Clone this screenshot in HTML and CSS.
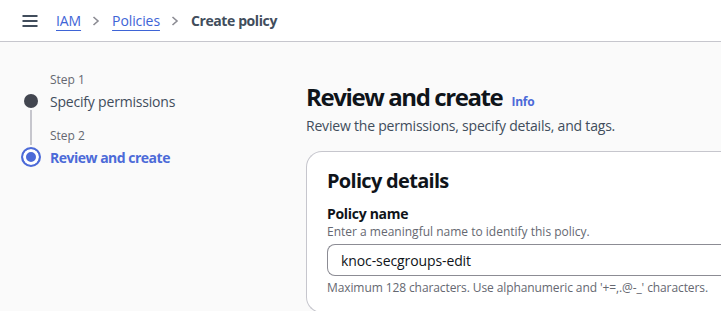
FILE: index.html
```html
<!DOCTYPE html>
<html>
<head>
<meta charset="utf-8">
<link rel="stylesheet" href="styles.css">
</head>
<body>
<header class="topbar">
  <svg class="menu" width="16" height="12" viewBox="0 0 16 12"><path d="M0.5 1h15M0.5 6h15M0.5 11h15" stroke="#414d5c" stroke-width="2" fill="none"/></svg>
  <nav class="crumbs">
    <a class="crumb-link">IAM</a>
    <svg class="chev" width="8" height="14" viewBox="0 0 8 14"><path d="M1.5 3l4.5 4-4.5 4" stroke="#8c8c94" stroke-width="1.6" fill="none"/></svg>
    <a class="crumb-link">Policies</a>
    <svg class="chev" width="8" height="14" viewBox="0 0 8 14"><path d="M1.5 3l4.5 4-4.5 4" stroke="#8c8c94" stroke-width="1.6" fill="none"/></svg>
    <span class="crumb-current">Create policy</span>
  </nav>
</header>
<div class="layout">
  <aside class="steps">
    <div class="step">
      <div class="step-label">Step 1</div>
      <div class="step-row">
        <span class="dot done"></span>
        <span class="step-title">Specify permissions</span>
      </div>
    </div>
    <div class="connector"></div>
    <div class="step">
      <div class="step-label">Step 2</div>
      <div class="step-row">
        <span class="dot active"></span>
        <span class="step-title active-title">Review and create</span>
      </div>
    </div>
  </aside>
  <main class="content">
    <div class="page-head">
      <h1>Review and create</h1>
      <a class="info">Info</a>
    </div>
    <p class="subtitle">Review the permissions, specify details, and tags.</p>
    <section class="card">
      <h2>Policy details</h2>
      <div class="field">
        <div class="field-label">Policy name</div>
        <div class="field-desc">Enter a meaningful name to identify this policy.</div>
        <div class="input">knoc-secgroups-edit</div>
        <div class="field-hint">Maximum 128 characters. Use alphanumeric and '+=,.@-_' characters.</div>
      </div>
    </section>
  </main>
</div>
</body>
</html>
```
FILE: styles.css
```css
* { box-sizing: border-box; }
html, body { margin: 0; padding: 0; }
body {
  width: 721px;
  height: 311px;
  overflow: hidden;
  background: #fafafa;
  font-family: "Open Sans", "Noto Sans", sans-serif;
  color: #0f141a;
}
.topbar {
  height: 42px;
  background: #ffffff;
  border-bottom: 1px solid #c6c6cd;
  display: flex;
  align-items: center;
  padding-left: 22px;
}
.menu { margin-right: 18px; }
.crumbs {
  display: flex;
  align-items: center;
  font-size: 14px;
  letter-spacing: -0.1px;
}
.crumb-link {
  color: #3e64d6;
  text-decoration: underline;
  text-underline-offset: 4px;
  text-decoration-thickness: 1px;
}
.chev { margin: 0 12px 0 11px; }
.crumb-current { color: #414d5c; font-weight: 700; letter-spacing: -0.4px; }

.layout {
  display: flex;
  padding-top: 30px;
}
.steps {
  width: 306px;
  padding-left: 24px;
  flex-shrink: 0;
}
.step-label {
  font-size: 12px;
  color: #656871;
  padding-left: 26px;
  line-height: 16px;
}
.step-row {
  display: flex;
  align-items: center;
  gap: 12px;
  height: 22px;
  margin-top: 2px;
}
.dot {
  width: 14px;
  height: 14px;
  border-radius: 50%;
  flex-shrink: 0;
}
.dot.done { background: #424650; }
.dot.active {
  width: 20px;
  height: 20px;
  margin-left: -3px;
  margin-right: -3px;
  border: 2px solid #4c6ad8;
  background: #4c6ad8;
  box-shadow: inset 0 0 0 3px #ffffff;
}
.step-title { font-size: 14px; color: #414d5c; letter-spacing: -0.2px; }
.active-title { color: #4c6ad8; font-weight: 700; letter-spacing: -0.5px; }
.connector {
  width: 2px;
  height: 35px;
  margin: -2px 0 -17px 6px;
  background: #c6c6cd;
}

.content { flex: 1; min-width: 0; }
.page-head { display: flex; align-items: baseline; gap: 9px; margin-top: 10px; }
h1 {
  margin: 0;
  font-size: 24px;
  font-weight: 700;
  line-height: 30px;
  letter-spacing: -1.4px;
}
.info { color: #4c6ad8; font-size: 12px; font-weight: 700; letter-spacing: -0.2px; }
.subtitle {
  margin: 4px 0 0;
  font-size: 14px;
  color: #414d5c;
  line-height: 20px;
  letter-spacing: -0.2px;
}
.card {
  margin-top: 15px;
  background: #ffffff;
  border: 1px solid #c6c6cd;
  border-right: none;
  border-radius: 16px 0 0 16px;
  padding: 16px 0 16px 20px;
}
h2 {
  margin: 0;
  font-size: 20px;
  font-weight: 700;
  line-height: 26px;
  letter-spacing: -0.7px;
}
.field { margin-top: 11px; }
.field-label { font-size: 14px; font-weight: 700; line-height: 18px; letter-spacing: -0.3px; }
.field-desc { font-size: 12px; color: #656871; line-height: 16px; margin-top: 1px; }
.input {
  margin-top: 4px;
  height: 32px;
  border: 1px solid #8c8c94;
  border-right: none;
  border-radius: 8px 0 0 8px;
  padding: 0 13px;
  display: flex;
  align-items: center;
  font-size: 14px;
  color: #0f141a;
  letter-spacing: -0.1px;
}
.field-hint { font-size: 12px; color: #656871; line-height: 16px; margin-top: 4px; letter-spacing: -0.1px; }
```
